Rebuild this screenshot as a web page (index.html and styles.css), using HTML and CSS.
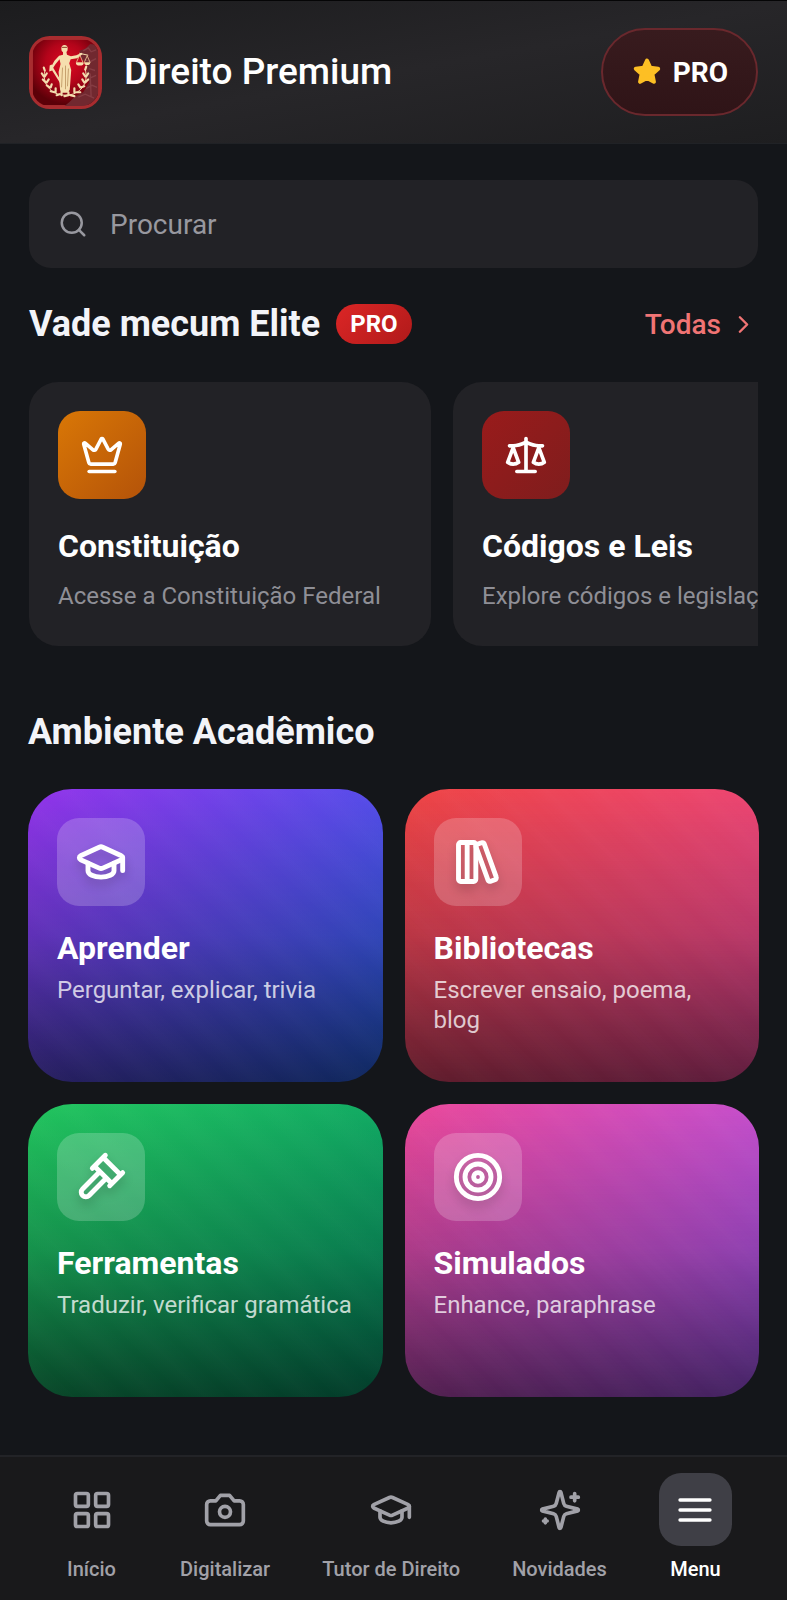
FILE: index.html
```html
<!DOCTYPE html>
<html lang="pt-BR">
<head>
<meta charset="utf-8">
<meta name="viewport" content="width=device-width, initial-scale=1">
<title>Direito Premium</title>
<link rel="stylesheet" href="styles.css">
</head>
<body>
<header class="topbar">
  <div class="brand">
    <svg class="brand-logo" viewBox="0 0 74 74" aria-hidden="true">
      <defs>
        <radialGradient id="logo-red" cx="50%" cy="36%" r="62%">
          <stop offset="0" stop-color="#e00a22"/>
          <stop offset="0.5" stop-color="#b3041a"/>
          <stop offset="1" stop-color="#5c0008"/>
        </radialGradient>
        <clipPath id="logo-clip"><rect x="3" y="3" width="68" height="68" rx="18"/></clipPath>
      </defs>
      <rect width="74" height="74" rx="21" fill="#a82c2f"/>
      <g clip-path="url(#logo-clip)">
        <rect x="4" y="4" width="66" height="66" fill="url(#logo-red)"/>
        <path d="M70 9l-8-1-5 5-6 2 2 8 6 6-1 10 3 8-6 10-8 4-6 6-5 4h34z" fill="#71282f"/>
        <path d="M55 15l5-3 3 4 5-2M56 24l6 2 6-3M61 33l6 2M61 43l7-3M58 53l6-3 5 2M50 62l7-3 9 4M62 38l1 24" fill="none" stroke="#8f454b" stroke-width="1.4" opacity=".7"/>
      </g>
      <g fill="#f6dfae">
        <ellipse cx="36" cy="13" rx="3.2" ry="3.8"/>
        <path d="M34.500 16h3.400l.6 3 4 1.600 5.500-1 5.500-2.600.7 1.500-5.500 4-6.500 1-1.400 4 2 7-1.500 20-1.800 3h-7l-1-3-1.500-18 2-8-1-5-4 5-4 6-1.700-1.200 4.500-8.300 4.700-5 4-1z"/>
        <path d="M21 30l2-1 2 4 12 20-1.500 1-12-19-3 1z"/>
        <path d="M48 27l3.400-8 3.400 8zM56 27l3-7 3 7z" fill="none" stroke="#f0cf9a" stroke-width=".8"/>
        <path d="M47.500 27h8a4 3 0 0 1-8 0zM56 27h6a3 2.500 0 0 1-6 0zM51 17l9 2v1l-9-2z"/>
      </g>
      <path d="M34 32l-1 20M37 30v24M40 33l-1 18" stroke="#b08550" stroke-width=".7" fill="none"/>
      <path d="M33.500 11.500h5" stroke="#8b3a26" stroke-width="1"/>
      <g fill="none" stroke="#f3dcae" stroke-linecap="round">
        <path d="M16 36C13 48 22 60 37 60S61 48 57 34" stroke-width="1"/>
        <path d="M15 32l1 3M13 38l2 3M18 38l-2 3M14 44l3 3M20 44l-2 3M18 50l3 2M23 49l-1 3M22 56l4 1M27 53l0 4M28 60l3-1M33 57v3M36 61l4-1M58 31l-1 3M60 38l-2 3M55 38l2 3M60 44l-3 3M54 44l2 3M56 51l-3 1M50 49l2 3M52 57l-4 0M46 53l0 4M46 61l-4-1M40 57v3" stroke-width="2.200"/>
      </g>
    </svg>
    <h1 class="brand-name">Direito Premium</h1>
  </div>
  <button class="pro-button" type="button">
    <svg class="star" viewBox="0 0 24 24" aria-hidden="true"><path d="M12 3.400l2.500 5.400 5.900.7-4.400 4 1.200 5.900-5.200-2.900-5.200 2.900 1.200-5.900-4.400-4 5.900-.7z"/></svg>
    PRO
  </button>
</header>

<main class="content">
  <label class="search">
    <svg class="icon search-icon" viewBox="0 0 24 24" aria-hidden="true"><circle cx="11" cy="11" r="8"/><path d="m21 21-4.300-4.300"/></svg>
    <input class="search-input" type="search" placeholder="Procurar" aria-label="Procurar">
  </label>

  <section class="vade">
    <div class="section-head">
      <h2 class="section-title">Vade mecum Elite</h2>
      <span class="badge">PRO</span>
      <a class="see-all" href="#todas">Todas
        <svg class="icon chevron" viewBox="0 0 24 24" aria-hidden="true"><path d="m9 18 6-6-6-6"/></svg>
      </a>
    </div>
    <div class="carousel">
      <a class="law-card" href="#constituicao">
        <span class="tile tile-amber"><svg class="icon tile-icon" viewBox="0 0 24 24" aria-hidden="true"><path d="M11.562 3.266a.5.5 0 0 1 .876 0L15.390 8.870a1 1 0 0 0 1.516.294L21.183 5.500a.5.5 0 0 1 .798.519l-2.834 10.246a1 1 0 0 1-.956.734H5.810a1 1 0 0 1-.957-.734L2.020 6.020a.5.5 0 0 1 .798-.519l4.276 3.664a1 1 0 0 0 1.516-.294z"/><path d="M5 21h14"/></svg></span>
        <h3 class="card-title">Constituição</h3>
        <p class="law-text">Acesse a Constituição Federal</p>
      </a>
      <a class="law-card" href="#codigos">
        <span class="tile tile-red"><svg class="icon tile-icon" viewBox="0 0 24 24" aria-hidden="true"><path d="m16 16 3-8 3 8c-.87.65-1.920 1-3 1s-2.130-.35-3-1Z"/><path d="m2 16 3-8 3 8c-.87.65-1.920 1-3 1s-2.130-.35-3-1Z"/><path d="M7 21h10M12 3v18M3 7h2c2 0 5-1 7-2 2 1 5 2 7 2h2"/></svg></span>
        <h3 class="card-title">Códigos e Leis</h3>
        <p class="law-text">Explore códigos e legislação</p>
      </a>
    </div>
  </section>

  <section class="academic">
    <h2 class="section-title">Ambiente Acadêmico</h2>
    <div class="grid">
      <a class="area-card area-learn" href="#aprender">
        <span class="tile tile-glass"><svg class="icon area-icon" viewBox="0 0 24 24" aria-hidden="true"><path d="M21.420 10.922a1 1 0 0 0-.019-1.838L12.830 5.180a2 2 0 0 0-1.660 0L2.600 9.080a1 1 0 0 0 0 1.832l8.570 3.908a2 2 0 0 0 1.660 0z"/><path d="M22 10v6M6 12.500V16a6 3 0 0 0 12 0v-3.500"/></svg></span>
        <h3 class="card-title">Aprender</h3>
        <p class="area-text">Perguntar, explicar, trivia</p>
      </a>
      <a class="area-card area-library" href="#bibliotecas">
        <span class="tile tile-glass"><svg class="icon area-icon" viewBox="0 0 24 24" aria-hidden="true"><rect x="3" y="3" width="8" height="18" rx="1"/><path d="M7 3v18M20.400 18.900c.2.5-.1 1.100-.6 1.300l-1.900.7c-.5.2-1.100-.1-1.300-.6L11.100 5.100c-.2-.5.1-1.100.6-1.300l1.900-.7c.5-.2 1.100.1 1.300.6Z"/></svg></span>
        <h3 class="card-title">Bibliotecas</h3>
        <p class="area-text">Escrever ensaio, poema, blog</p>
      </a>
      <a class="area-card area-tools" href="#ferramentas">
        <span class="tile tile-glass"><svg class="icon area-icon" viewBox="0 0 24 24" aria-hidden="true"><path d="m14.500 12.500-8 8a2.119 2.119 0 1 1-3-3l8-8M16 16l6-6M8 8l6-6M9 7l8 8M21 11l-8-8"/></svg></span>
        <h3 class="card-title">Ferramentas</h3>
        <p class="area-text">Traduzir, verificar gramática</p>
      </a>
      <a class="area-card area-tests" href="#simulados">
        <span class="tile tile-glass"><svg class="icon area-icon" viewBox="0 0 24 24" aria-hidden="true"><circle cx="12" cy="12" r="10"/><circle cx="12" cy="12" r="6"/><circle cx="12" cy="12" r="2"/></svg></span>
        <h3 class="card-title">Simulados</h3>
        <p class="area-text">Enhance, paraphrase</p>
      </a>
    </div>
  </section>
</main>

<nav class="tabbar" aria-label="Principal">
  <a class="tab" href="#inicio">
    <span class="tab-box"><svg class="icon tile-icon" viewBox="0 0 24 24" aria-hidden="true"><rect x="3" y="3" width="7" height="7" rx="1"/><rect x="14" y="3" width="7" height="7" rx="1"/><rect x="14" y="14" width="7" height="7" rx="1"/><rect x="3" y="14" width="7" height="7" rx="1"/></svg></span>
    <span>Início</span>
  </a>
  <a class="tab" href="#digitalizar">
    <span class="tab-box"><svg class="icon tile-icon" viewBox="0 0 24 24" aria-hidden="true"><path d="M14.500 4h-5L7 7H4a2 2 0 0 0-2 2v9a2 2 0 0 0 2 2h16a2 2 0 0 0 2-2V9a2 2 0 0 0-2-2h-3l-2.500-3z"/><circle cx="12" cy="13" r="3"/></svg></span>
    <span>Digitalizar</span>
  </a>
  <a class="tab" href="#tutor">
    <span class="tab-box"><svg class="icon tile-icon" viewBox="0 0 24 24" aria-hidden="true"><path d="M21.420 10.922a1 1 0 0 0-.019-1.838L12.830 5.180a2 2 0 0 0-1.660 0L2.600 9.080a1 1 0 0 0 0 1.832l8.570 3.908a2 2 0 0 0 1.660 0z"/><path d="M22 10v6M6 12.500V16a6 3 0 0 0 12 0v-3.500"/></svg></span>
    <span>Tutor de Direito</span>
  </a>
  <a class="tab" href="#novidades">
    <span class="tab-box"><svg class="icon tile-icon" viewBox="0 0 24 24" aria-hidden="true"><path d="M9.937 15.500A2 2 0 0 0 8.500 14.063l-6.135-1.582a.5.5 0 0 1 0-.962L8.500 9.936A2 2 0 0 0 9.937 8.500l1.582-6.135a.5.5 0 0 1 .963 0L14.063 8.500A2 2 0 0 0 15.500 9.937l6.135 1.581a.5.5 0 0 1 0 .964L15.500 14.063a2 2 0 0 0-1.437 1.437l-1.582 6.135a.5.5 0 0 1-.963 0z"/><path d="M20 3v4M22 5h-4M4 17v2M5 18H3"/></svg></span>
    <span>Novidades</span>
  </a>
  <a class="tab tab-active" href="#menu" aria-current="page">
    <span class="tab-box"><svg class="icon tile-icon" viewBox="0 0 24 24" aria-hidden="true"><path d="M3 6h18M3 12h18M3 18h18"/></svg></span>
    <span>Menu</span>
  </a>
</nav>
</body>
</html>
```

FILE: styles.css
```css
* { box-sizing: border-box; }

body {
  margin: 0;
  min-height: 100vh;
  display: flex;
  flex-direction: column;
  background: #14161a;
  color: #fff;
  font-family: Roboto, "Liberation Sans", sans-serif;
}

h1, h2, h3, p { margin: 0; }
a { color: inherit; text-decoration: none; }

.icon {
  display: block;
  fill: none;
  stroke: currentColor;
  stroke-width: 2;
  stroke-linecap: round;
  stroke-linejoin: round;
}

/* Header */
.topbar {
  display: flex;
  align-items: center;
  justify-content: space-between;
  padding: 27px 29px;
  border-top: 1px solid #050506;
  border-bottom: 1px solid #202226;
  background: linear-gradient(170deg, #1c1c1e, #272629 50%, #1e1e20);
}
.brand { display: flex; align-items: center; gap: 22px; }
.brand-logo { display: block; width: 73px; height: 73px; }
.brand-name { font-size: 37px; line-height: 44px; font-weight: 500; }
.pro-button {
  display: flex;
  align-items: center;
  gap: 10px;
  height: 88px;
  padding: 0 28px;
  border: 2px solid #6a282d;
  border-radius: 44px;
  background: linear-gradient(#381b1e, #2f1417);
  color: #fff;
  font-family: inherit;
  font-size: 28px;
  font-weight: 700;
}
.star {
  width: 32px;
  height: 32px;
  fill: #fdbf24;
  stroke: #fdbf24;
  stroke-width: 3;
  stroke-linejoin: round;
}

/* Content */
.content { flex: 1; padding: 36px 28px 58px; }
.search {
  display: flex;
  align-items: center;
  gap: 22px;
  height: 88px;
  margin: 0 1px;
  padding: 0 29px;
  border-radius: 22px;
  background: #222226;
  color: #98989f;
}
.search-icon { width: 30px; height: 30px; }
.search-input {
  flex: 1;
  min-width: 0;
  padding: 0;
  border: 0;
  outline: 0;
  background: none;
  color: #fff;
  font-family: inherit;
  font-size: 28px;
}
.search-input::placeholder { color: #98989f; opacity: 1; }

.vade { margin: 0 1px; }
.section-head { display: flex; align-items: center; margin: 34px 0 36px; }
.section-title { font-size: 36px; line-height: 44px; font-weight: 700; color: #f3f4f8; }
.badge {
  margin-left: 16px;
  padding: 0 14px;
  border-radius: 20px;
  background: linear-gradient(135deg, #dc2626, #b01a1a);
  font-size: 24px;
  line-height: 40px;
  font-weight: 700;
}
.see-all {
  display: flex;
  align-items: center;
  gap: 8px;
  margin-left: auto;
  color: #f07474;
  font-size: 28px;
  font-weight: 500;
}
.chevron { width: 29px; height: 29px; }

.carousel { display: flex; gap: 22px; overflow: hidden; }
.law-card {
  flex: 0 0 402px;
  padding: 29px 29px 34px;
  border-radius: 29px;
  background: #222226;
  white-space: nowrap;
}
.tile {
  display: grid;
  place-items: center;
  width: 88px;
  height: 88px;
  border-radius: 22px;
}
.tile-icon { width: 44px; height: 44px; }
.tile-amber { background: linear-gradient(135deg, #d97706, #b45309); }
.tile-red { background: linear-gradient(135deg, #991b1b, #7f1d1d); }
.tile-glass { background: rgba(255, 255, 255, 0.2); }
.card-title { font-size: 32px; line-height: 40px; font-weight: 700; }
.law-card .card-title { margin-top: 27px; }
.law-text { margin-top: 14px; color: #8f8f96; font-size: 24px; line-height: 32px; }

.academic { margin-top: 64px; }
.grid {
  display: grid;
  grid-template-columns: 1fr 1fr;
  gap: 22px;
  margin-top: 35px;
}
.area-card {
  min-height: 293px;
  padding: 29px;
  border-radius: 44px;
  background:
    repeating-linear-gradient(45deg, transparent 0, rgba(255, 255, 255, 0.015) 18px, transparent 36px),
    linear-gradient(rgba(0, 0, 0, 0), rgba(0, 0, 0, 0.22) 50%, rgba(0, 0, 0, 0.6)),
    linear-gradient(135deg, var(--from), var(--to));
}
.area-learn { --from: #9333ea; --to: #2563eb; }
.area-library { --from: #ef4444; --to: #ec4899; }
.area-tools { --from: #22c55e; --to: #059669; }
.area-tests { --from: #ec4899; --to: #a855f7; }
.area-icon {
  width: 52px;
  height: 52px;
  stroke-width: 2.25;
  filter: drop-shadow(0 6px 5px rgba(0, 0, 0, 0.16));
}
.area-card .card-title { margin-top: 22px; }
.area-text { margin-top: 7px; color: rgba(255, 255, 255, 0.75); font-size: 24px; line-height: 30px; }

/* Bottom navigation */
.tabbar {
  display: flex;
  justify-content: space-around;
  padding: 16px 29px 20px;
  border-top: 2px solid #222327;
  background: #19191b;
}
.tab {
  display: flex;
  flex-direction: column;
  align-items: center;
  gap: 11px;
  color: #a1a1a8;
  font-size: 20px;
  line-height: 24px;
  font-weight: 500;
}
.tab-box {
  display: grid;
  place-items: center;
  width: 73px;
  height: 73px;
  border-radius: 22px;
}
.tab-active { color: #fff; }
.tab-active .tab-box { background: #3f3f46; }
.tab-active .tile-icon { width: 40px; height: 40px; }
```
